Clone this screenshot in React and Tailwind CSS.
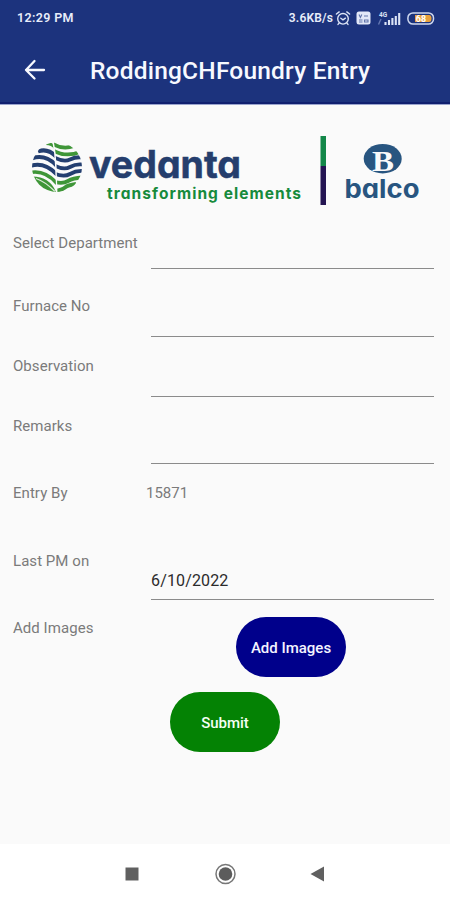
import React from "react";

const rows = [
  { label: "Select Department", row: "h-[63px]", field: "h-[35px]" },
  { label: "Furnace No", row: "h-[60px]", field: "h-[40px]" },
  { label: "Observation", row: "h-[60px]", field: "h-[40px]" },
  { label: "Remarks", row: "h-[67px]", field: "h-[47px]" },
];

function StatusBar() {
  return (
    <div className="flex h-9 items-center justify-between pl-[17px] pr-[15px] text-[#e8edfa]">
      <span className="pt-px text-[12.5px] font-semibold tracking-[0.35px]">12:29 PM</span>
      <div className="flex items-center">
        <span className="mr-[2px] text-[12px] font-semibold tracking-[0.15px]">3.6KB/s</span>
        <svg className="mr-[5px]" width="16" height="16" viewBox="0 0 16 16" fill="none" stroke="#dce4f6" strokeWidth="1.4" strokeLinecap="round">
          <circle cx="8" cy="8.8" r="5.3" />
          <path d="M1.4 4 4.2 1.9M14.6 4 11.8 1.9M5.8 8.2 8 9.8l2.4-1.6M4 13.2 3 14.4M12 13.2l1 1.2" />
        </svg>
        <svg className="mr-[6px]" width="15" height="14" viewBox="0 0 15 14">
          <rect x="0.5" y="0.5" width="14" height="13" rx="2.5" fill="#e2e8f8" />
          <path d="M3 3.500l1.400 3 1.400-3M8 5h4M3 9h3.500M3 11h3.500M8.500 9h3.500v2H8.500z" stroke="#6175aa" strokeWidth="1.1" fill="none" />
        </svg>
        <svg className="mr-[6px]" width="24" height="15" viewBox="0 0 24 15">
          <text x="2" y="5.8" fontSize="6.5" fontWeight="700" fontFamily="Roboto, sans-serif" fill="#dce4f6">4G</text>
          <path d="M1.500 13.500 4 8" stroke="#6477b2" strokeWidth="1.4" />
          <path d="M8.500 14v-3M12 14V9M15.400 14V7M18.800 14V5M22.200 14V2" stroke="#dce4f6" strokeWidth="2.1" />
        </svg>
        <svg width="28" height="13" viewBox="0 0 28 13">
          <rect x="0.9" y="0.9" width="25.6" height="11.2" rx="5" fill="none" stroke="#cdd7ef" strokeWidth="1.5" />
          <path d="M8 3h14q2.500 0 2.500 3.500T22 10H8z" fill="#e9a03c" />
          <text x="14" y="9.7" textAnchor="middle" fontSize="9" fontWeight="700" fontFamily="Roboto, sans-serif" fill="#fff">68</text>
        </svg>
      </div>
    </div>
  );
}

function Logos() {
  return (
    <svg width="450" height="129" viewBox="0 105 450 129" className="block shrink-0">
      <defs>
        <clipPath id="globe"><ellipse cx="57" cy="167" rx="25" ry="25" /></clipPath>
        <clipPath id="globe-left"><path d="M30 140h22q2.500 12 3 25t1.500 29H30z" /></clipPath>
        <clipPath id="globe-right"><path d="M53.500 140H84v54H57.500q-.5-16-1-29t-3-25z" /></clipPath>
      </defs>
      <g clipPath="url(#globe)" fill="none">
        <g clipPath="url(#globe-left)">
          <path d="M46 143.500q6 0 10 5" stroke="#3f9638" strokeWidth="3" />
          <g stroke="#243f70" strokeWidth="4">
            <path d="M38 151.500q10-4 19 6" />
            <path d="M32 158.500q13-5 25 7.500" />
            <path d="M30 166q14-5 27 8.500" />
          </g>
          <path d="M30 172.500q15-3 27 11" stroke="#3f9638" strokeWidth="3.500" />
          <path d="M31 176.500q19 0 25 15.500-16 1-25-15.500z" fill="#3f9638" />
          <path d="M36 178.500q9 3 19 13" stroke="#dcebd8" strokeWidth="1.200" />
        </g>
        <g clipPath="url(#globe-right)" strokeWidth="3.800">
          <g stroke="#3f9638">
            <path d="M53 144q10 6 21 2" />
            <path d="M53 150.500q13 7 27 1.500" />
            <path d="M55 182q8 2 13-1t14-3.500" />
            <path d="M55 191q7-1 10-3.500t11-3.500" />
          </g>
          <g stroke="#243f70">
            <path d="M54 157.500q10 5 16 2t13-2" />
            <path d="M54 165.500q10 5 16 1.500t13-2.500" />
            <path d="M54 173.500q10 4 16 .5t13-3" />
          </g>
        </g>
      </g>
      <text x="89" y="178" fontSize="38" fontWeight="700" textLength="152" lengthAdjust="spacingAndGlyphs" fill="#253e6d" stroke="#253e6d" strokeWidth="0.5" className="font-[Inter,sans-serif] [font-feature-settings:'cv11']">vedanta</text>
      <text x="107" y="199" fontSize="15.500" fontWeight="700" textLength="194" fill="#168a3c" className="font-[Inter,sans-serif] [font-feature-settings:'cv11']">transforming elements</text>
      <path d="M320.500 136h5.500v30h-5.500z" fill="#138748" />
      <path d="M320.500 166h5.500v39h-5.500z" fill="#241452" />
      <ellipse cx="382.700" cy="158.700" rx="19" ry="14.800" fill="#285580" />
      <text x="372" y="170.500" fontSize="30" fontWeight="700" textLength="22" lengthAdjust="spacingAndGlyphs" fill="#fafafa" fontFamily="Liberation Serif, serif">B</text>
      <text x="344.500" y="197.500" fontSize="26" fontWeight="700" textLength="75" lengthAdjust="spacingAndGlyphs" fill="#285580" className="font-[Inter,sans-serif] [font-feature-settings:'cv11']">balco</text>
    </svg>
  );
}

function Label({ children }) {
  return <span className="w-[138px] shrink-0 whitespace-nowrap text-[15px] leading-[18px] tracking-[0.05px] text-[#7b7b7b]">{children}</span>;
}

export default function App() {
  return (
    <div className="flex h-[900px] w-[450px] flex-col overflow-hidden bg-[#fafafa] font-[Roboto,sans-serif]">
      <header className="h-[105px] shrink-0 border-b border-[#9ba5ce] bg-[#1c337d]">
        <StatusBar />
        <div className="flex h-[68px] items-center border-b-2 border-[#10206f] pl-[24px]">
          <svg className="mt-[2px]" width="22" height="22" viewBox="0 0 22 22" fill="none" stroke="#f7f9ff" strokeWidth="2.3" strokeLinecap="round" strokeLinejoin="round">
            <path d="M20 11H2M10.500 2 2 11l8.500 8.500" />
          </svg>
          <h1 className="ml-[44px] mt-[3px] whitespace-nowrap text-[24.5px] font-medium leading-7 tracking-[0.2px] text-[#f7f9ff]">RoddingCHFoundry Entry</h1>
        </div>
      </header>
      <Logos />
      <main className="flex grow flex-col pl-[13px] pr-[16px]">
        {rows.map((r) => (
          <div key={r.label} className={`flex shrink-0 ${r.row}`}>
            <Label>{r.label}</Label>
            <div className={`grow border-b border-[#8b8b8b] ${r.field}`} />
          </div>
        ))}
        <div className="flex h-[68px] shrink-0">
          <Label>Entry By</Label>
          <span className="-ml-[5px] text-[15px] leading-[18px] text-[#7b7b7b]">15871</span>
        </div>
        <div className="flex h-[65px] shrink-0">
          <Label>Last PM on</Label>
          <div className="flex h-12 grow items-end border-b border-[#8b8b8b] pb-[8px] text-[16px] leading-5 tracking-[0.15px] text-[#2b2b2b]">6/10/2022</div>
        </div>
        <div className="flex h-[75px] shrink-0">
          <div className="flex w-[138px] shrink-0 items-start pt-[2px]"><Label>Add Images</Label></div>
          <button className="ml-[85px] h-[60px] w-[110px] rounded-[30px] bg-[#00008b] pt-[2px] text-[15px] font-medium text-[#f4f4ff]">Add Images</button>
        </div>
        <button className="ml-[157px] h-[60px] w-[110px] shrink-0 rounded-[30px] bg-[#048204] pt-[2px] text-[15px] font-medium text-[#f4fff4]">Submit</button>
      </main>
      <nav className="flex h-[56px] shrink-0 items-center bg-white pl-[125px] pr-[125px] pt-[3px]">
        <svg width="200" height="24" viewBox="0 0 200 24">
          <path d="M.5 5.500h13v13H.5z" fill="#606060" />
          <circle cx="100.500" cy="12" r="9.500" fill="none" stroke="#777" strokeWidth="1.500" />
          <circle cx="100.500" cy="12" r="6.800" fill="#5c5c5c" />
          <path d="M185.500 12 199 4.500v15z" fill="#606060" />
        </svg>
      </nav>
    </div>
  );
}
